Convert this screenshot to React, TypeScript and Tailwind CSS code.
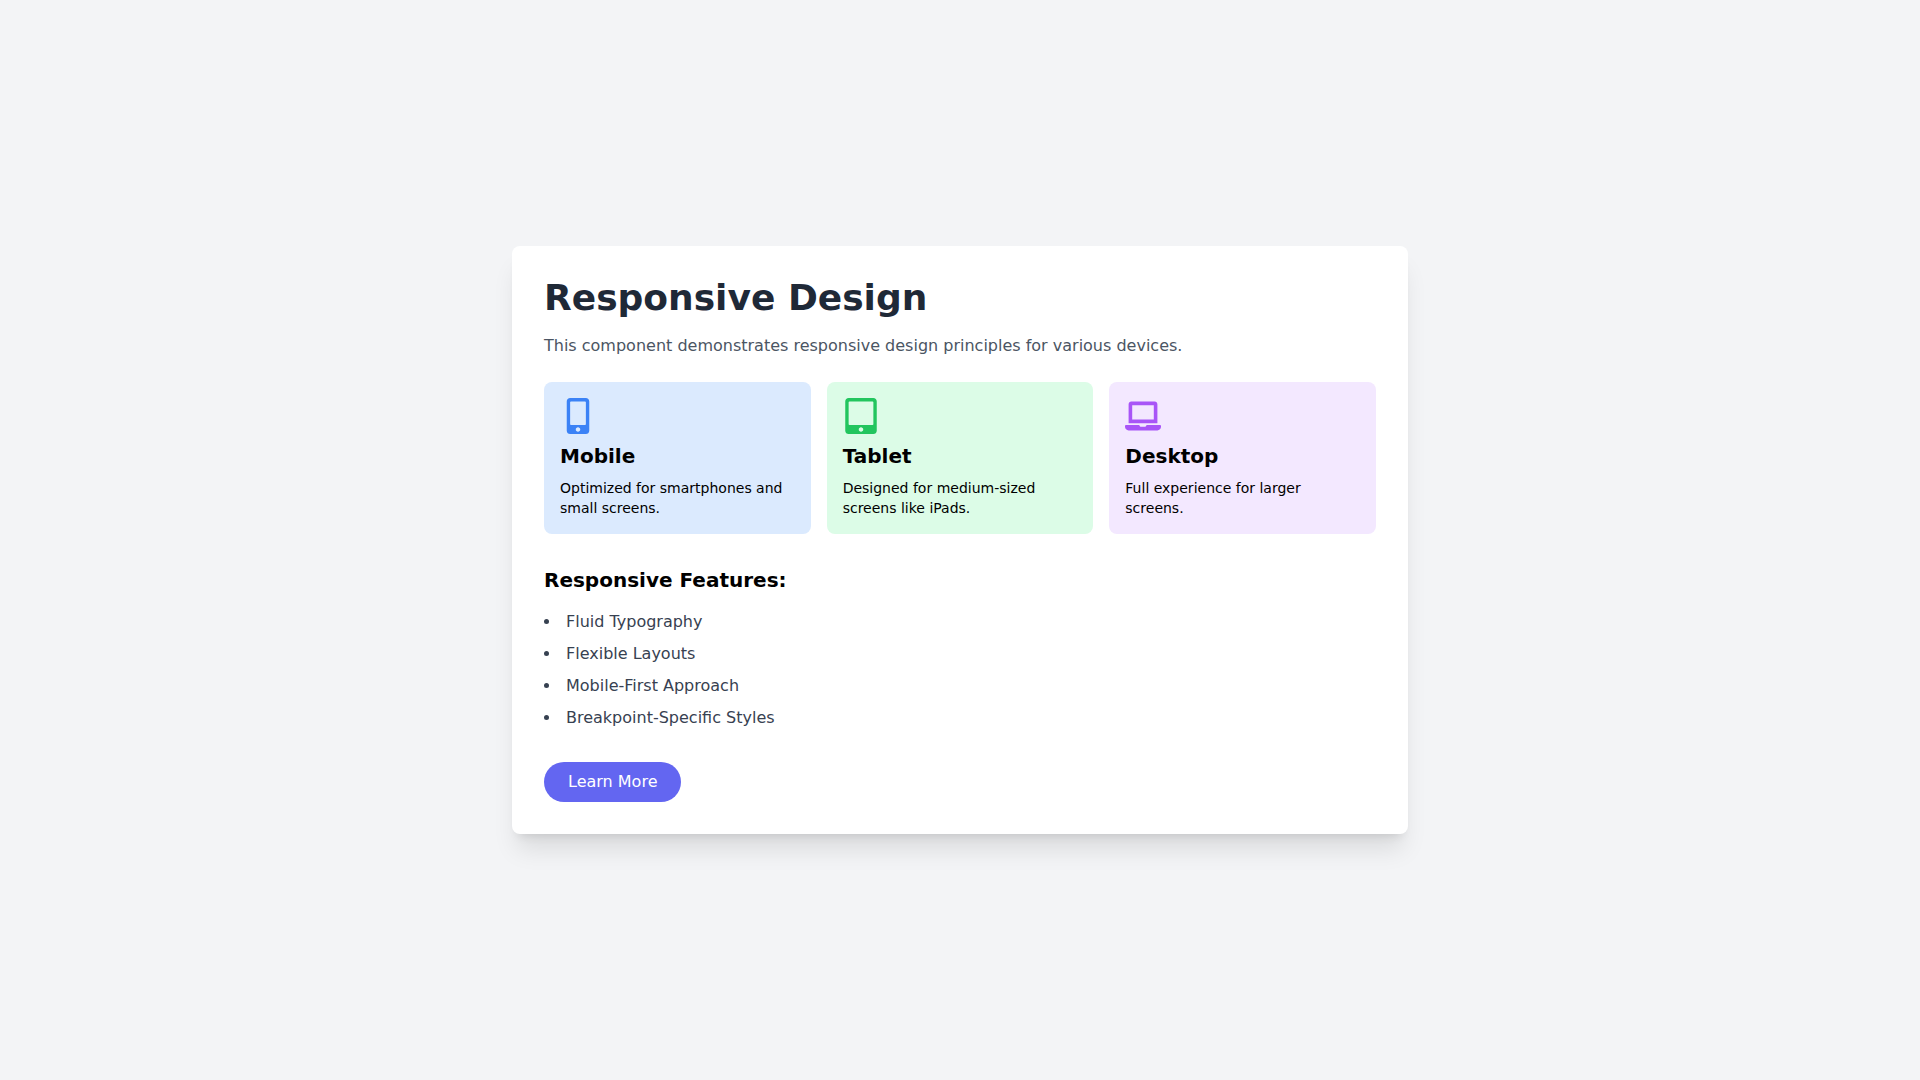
import React from "react";
import { FaLaptop, FaMobileAlt, FaTabletAlt } from "react-icons/fa";

const devices = [
    {
        name: "Mobile",
        text: "Optimized for smartphones and small screens.",
        icon: FaMobileAlt,
        card: "bg-[#dbeafe]",
        color: "text-[#3b82f6]",
    },
    {
        name: "Tablet",
        text: "Designed for medium-sized screens like iPads.",
        icon: FaTabletAlt,
        card: "bg-[#dcfce7]",
        color: "text-[#22c55e]",
    },
    {
        name: "Desktop",
        text: "Full experience for larger screens.",
        icon: FaLaptop,
        card: "bg-[#f3e8ff]",
        color: "text-[#a855f7]",
    },
];

const features = [
    "Fluid Typography",
    "Flexible Layouts",
    "Mobile-First Approach",
    "Breakpoint-Specific Styles",
];

export default function App() {
    return (
        <div className="min-h-screen bg-[#f3f4f6] flex items-center justify-center p-4 font-['DejaVu_Sans',sans-serif] text-black">
            <div className="w-full max-w-4xl bg-white rounded-lg shadow-xl p-8">
                <h1 className="text-4xl font-bold text-[#1f2937] mb-4">Responsive Design</h1>
                <p className="text-base text-[#4b5563] mb-6">
                    This component demonstrates responsive design principles for various devices.
                </p>
                <div className="grid grid-cols-1 sm:grid-cols-2 lg:grid-cols-3 gap-4 mb-8">
                    {devices.map(({ name, text, icon: Icon, card, color }) => (
                        <div key={name} className={`p-4 rounded-lg ${card}`}>
                            <Icon className={`text-4xl mb-2 ${color}`} />
                            <h2 className="text-xl font-semibold mb-2">{name}</h2>
                            <p className="text-sm">{text}</p>
                        </div>
                    ))}
                </div>
                <h3 className="text-xl font-semibold mb-4">Responsive Features:</h3>
                <ul className="list-disc list-inside space-y-2 text-[#374151] mb-8">
                    {features.map((f) => (
                        <li key={f}>{f}</li>
                    ))}
                </ul>
                <button type="button" className="bg-[#6366f1] hover:bg-[#4f46e5] text-white px-6 py-2 rounded-full cursor-pointer">
                    Learn More
                </button>
            </div>
        </div>
    );
}
